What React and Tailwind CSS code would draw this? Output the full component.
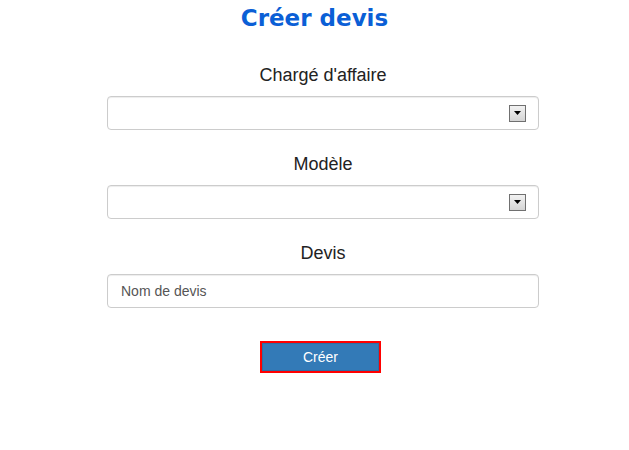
import React from "react";

const SelectBox = () => (
  <div className="flex h-[34px] w-full items-center justify-end rounded border border-[#cccccc] bg-white pr-[12px] shadow-[inset_0_1px_1px_rgba(0,0,0,0.075)]">
    {/* old-style dropdown button */}
    <div className="flex h-[17px] w-[17px] items-center justify-center border border-[#707070] bg-gradient-to-b from-[#f2f2f2] to-[#d4d4d4]">
      <svg width="7" height="4" viewBox="0 0 7 4">
        <polygon points="0,0 7,0 3.5,4" fill="#000" />
      </svg>
    </div>
  </div>
);

export default function App() {
  return (
    <div className="min-h-[450px] bg-white font-['Liberation_Sans',Arial,sans-serif] text-[#222222]">
      <h1 className="pt-[4px] text-center font-['DejaVu_Sans',Verdana,sans-serif] text-[23px] font-bold leading-[28px] text-[#0b5fd6]">
        Créer devis
      </h1>

      <div className="ml-[107px] mt-[33px] flex w-[432px] flex-col">
        <label className="text-center text-[18px] leading-[20px]">Chargé d'affaire</label>
        <div className="mt-[11px]">
          <SelectBox />
        </div>

        <label className="mt-[24px] text-center text-[18px] leading-[20px]">Modèle</label>
        <div className="mt-[11px]">
          <SelectBox />
        </div>

        <label className="mt-[24px] text-center text-[18px] leading-[20px]">Devis</label>
        <div className="mt-[11px]">
          <div className="flex h-[34px] w-full items-center rounded border border-[#cccccc] bg-white px-[13px] text-[14px] text-[#555555] shadow-[inset_0_1px_1px_rgba(0,0,0,0.075)]">
            Nom de devis
          </div>
        </div>

        <div className="ml-[153px] mt-[33px]">
          <button className="h-[32px] w-[121px] border-2 border-[#ff0000] bg-[#337ab7] p-0">
            <span className="flex h-full w-full items-center justify-center border border-[#2e6da4] text-[14px] text-white">
              Créer
            </span>
          </button>
        </div>
      </div>
    </div>
  );
}
